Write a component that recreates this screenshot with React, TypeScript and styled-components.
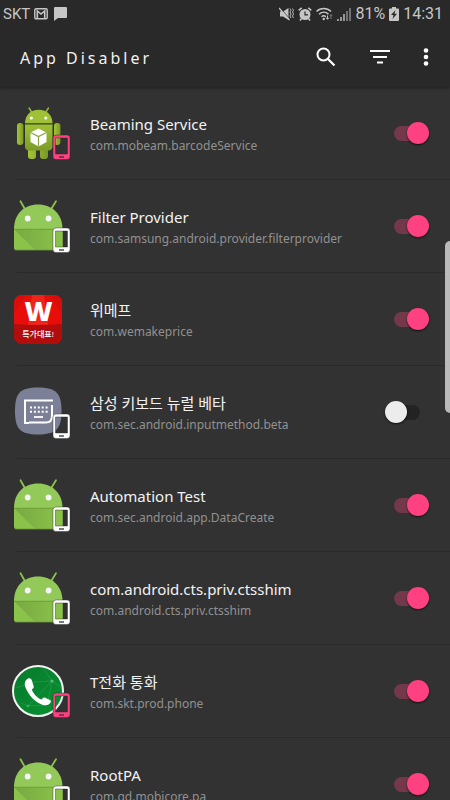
import React, { useId, useState } from "react";
import styled, { createGlobalStyle } from "styled-components";

const GlobalStyle = createGlobalStyle`
  *, *::before, *::after { box-sizing: border-box; }
  body {
    margin: 0;
    background: #323232;
    color: #f2f2f2;
    font-family: "Noto Sans", "Noto Sans CJK KR", sans-serif;
  }
`;

const Screen = styled.div`
  position: relative;
  display: flex;
  flex-direction: column;
  height: 100vh;
  overflow: hidden;
`;

const Header = styled.header`
  position: relative;
  z-index: 1;
  flex: none;
  background: #292929;
  box-shadow: 0 1px 3px rgba(0, 0, 0, 0.4);
`;

const StatusBar = styled.div`
  display: flex;
  align-items: center;
  justify-content: space-between;
  height: 28px;
  padding: 0 7px 0 3px;
  color: #c6c6c6;
  font-family: Roboto, sans-serif;
  font-size: 16px;
  line-height: 20px;
`;

const StatusGroup = styled.div`
  display: flex;
  align-items: center;
  gap: 4px;
  svg { display: block; flex: none; }
`;

const Carrier = styled.span`
  font-size: 15px;
`;

const Toolbar = styled.div`
  display: flex;
  align-items: center;
  height: 59px;
  padding: 0 15px 2px 20px;
`;

const Title = styled.h1`
  flex: 1;
  margin: 0;
  padding-top: 2px;
  font-size: 16px;
  font-weight: 400;
  line-height: 24px;
  letter-spacing: 3px;
`;

const Actions = styled.div`
  display: flex;
  align-items: center;
  gap: 20px;
`;

const IconButton = styled.button<{ $width: number }>`
  display: flex;
  align-items: center;
  justify-content: center;
  width: ${(p) => p.$width}px;
  height: 28px;
  padding: 0;
  border: 0;
  background: none;
  color: #fff;
  cursor: pointer;
`;

const List = styled.ul`
  flex: 1;
  min-height: 0;
  margin: 0;
  padding: 0;
  list-style: none;
  overflow-y: auto;
  scrollbar-width: none;
`;

const Row = styled.li`
  margin-left: 17px;
  border-bottom: 1px solid #2a2a2a;
`;

const RowLabel = styled.label`
  display: flex;
  align-items: center;
  gap: 18px;
  height: 92px;
  padding-right: 20px;
  margin-left: -5px;
  cursor: pointer;
`;

const AppIcon = styled.svg`
  display: block;
  flex: none;
  width: 60px;
  height: 54px;
`;

const Texts = styled.span`
  display: flex;
  flex: 1;
  flex-direction: column;
  min-width: 0;
  padding-top: 4px;
  white-space: nowrap;
`;

const Name = styled.span`
  font-size: 15px;
  line-height: 22px;
`;

const PackageName = styled.span`
  color: #919191;
  font-size: 12px;
  line-height: 22px;
`;

const Switch = styled.input`
  appearance: none;
  flex: none;
  display: flex;
  align-items: center;
  width: 26px;
  height: 15px;
  margin: 0 10px 0 0;
  border-radius: 8px;
  background: #232323;
  cursor: pointer;

  &::before {
    content: "";
    flex: none;
    width: 22px;
    height: 22px;
    margin-left: -9px;
    border-radius: 50%;
    background: #ececec;
    box-shadow: 0 1px 2px rgba(0, 0, 0, 0.7);
  }
  &:checked { background: #73394b; }
  &:checked::before {
    margin-left: 13px;
    background: #ff4081;
  }
`;

const ScrollThumb = styled.div`
  position: absolute;
  z-index: 2;
  top: 241px;
  right: 0;
  width: 5px;
  height: 172px;
  border-radius: 5px 0 0 5px;
  background: #b9b9b9;
`;

const PINK = "#ff4081";

function DeviceBadge({ color }: { color: string }) {
  return (
    <g>
      <path
        fillRule="evenodd"
        fill={color}
        stroke="#262626"
        strokeOpacity=".7"
        strokeWidth=".6"
        d="M44 29h11a3 3 0 0 1 3 3v18.500a3 3 0 0 1-3 3H44a3 3 0 0 1-3-3V32a3 3 0 0 1 3-3ZM43.500 32V48h12V32Z"
      />
      <path d="M47 51h5" stroke="#333" strokeWidth="1.300" />
    </g>
  );
}

function DroidIcon() {
  return (
    <AppIcon viewBox="0 0 60 54" aria-hidden="true">
      <defs>
        <linearGradient id="droidShade" x1="0" y1="0" x2="1" y2="0">
          <stop offset="0" stopColor="#78a942" />
          <stop offset="1" stopColor="#8bc34a" />
        </linearGradient>
      </defs>
      <path d="M8.500 2.200 13.400 11M44 2.200 38.600 11" stroke="#8bc34a" strokeWidth="1.800" strokeLinecap="round" />
      <path d="M2 30C2 15 12 5.500 26 5.500S50.500 15 50.500 30Z" fill="#92c958" />
      <path d="M2 30h48.500v19a2 2 0 0 1-2 2H4a2 2 0 0 1-2-2Z" fill="#8bc34a" />
      <path d="M2 30h48.500v19a2 2 0 0 1-2 2H23Z" fill="url(#droidShade)" />
      <path d="M2 30.300h48.500" stroke="#6f9f3d" strokeWidth="1" />
      <path d="M3 51h46" stroke="#6d9a3c" strokeWidth=".8" />
      <circle cx="15.700" cy="19.500" r="2.900" fill="#f5f5f5" />
      <circle cx="36.600" cy="19.500" r="2.900" fill="#f5f5f5" />
      <DeviceBadge color="#fff" />
    </AppIcon>
  );
}

function RobotIcon() {
  return (
    <AppIcon viewBox="0 0 60 54" aria-hidden="true">
      <defs>
        <linearGradient id="robotBody" x1="0" y1="0" x2="0" y2="1">
          <stop offset="0" stopColor="#9fc136" />
          <stop offset="1" stopColor="#7c9c28" />
        </linearGradient>
        <linearGradient id="robotLimb" x1="0" y1="0" x2="1" y2="0">
          <stop offset="0" stopColor="#a4c436" />
          <stop offset="1" stopColor="#7b9a26" />
        </linearGradient>
      </defs>
      <path d="M17 2l4 6M36.500 2l-4 6" stroke="#9aba3b" strokeWidth="1.400" strokeLinecap="round" />
      <rect x="5" y="17" width="6.400" height="22" rx="3" fill="url(#robotLimb)" />
      <rect x="42" y="17" width="6.400" height="22" rx="3" fill="url(#robotLimb)" />
      <path d="M16 40h8v10a3 3 0 0 1-3 3h-2a3 3 0 0 1-3-3ZM28 40h8v10a3 3 0 0 1-3 3h-2a3 3 0 0 1-3-3Z" fill="url(#robotLimb)" />
      <path d="M13 18h27.500v22a4 4 0 0 1-4 4.500H17a4 4 0 0 1-4-4.500Z" fill="url(#robotBody)" />
      <path d="M13 17.500C13 9 18.500 3.800 26.700 3.800S40.500 9 40.500 17.500Z" fill="#9fc136" />
      <path d="M13 18h27.500" stroke="#344016" strokeWidth="1" />
      <circle cx="19.300" cy="12" r="1.600" fill="#fff" />
      <circle cx="33.800" cy="12" r="1.600" fill="#fff" />
      <path d="m26.500 22.500 8 4V36l-8 4.500-8-4.500v-9.500Z" fill="#fff" />
      <path d="m18.500 26.500 8 4 8-4M26.500 30.500v10" fill="none" stroke="#86a442" strokeWidth="1.200" />
      <DeviceBadge color={PINK} />
    </AppIcon>
  );
}

const IconText = styled.text`
  fill: #fff;
  text-anchor: middle;
  font-family: "Open Sans", "Noto Sans CJK KR", sans-serif;
`;

function ShopIcon() {
  return (
    <AppIcon viewBox="0 0 60 54" aria-hidden="true">
      <defs>
        <clipPath id="shopTile">
          <rect x="2" y="3" width="48" height="49" rx="8" />
        </clipPath>
      </defs>
      <g clipPath="url(#shopTile)">
        <path d="M2 3h48v49H2Z" fill="#e60d0a" />
        <path d="M15 3 2 21V3ZM37 3l13 18V3Z" fill="#d90d0a" />
        <path d="M20 3h12l4 30H16Z" fill="#ef241b" />
        <path d="M2 32q24 2 48 0v20H2Z" fill="#b20d0b" />
      </g>
      <IconText x="26.500" y="29" fontSize="27" fontWeight="800">W</IconText>
      <IconText x="26" y="45" fontSize="8" fontWeight="500">특가대표!</IconText>
    </AppIcon>
  );
}

function KeyboardIcon() {
  return (
    <AppIcon viewBox="0 0 60 54" aria-hidden="true">
      <path d="M26 2.500C44 2.500 49.500 8 49.500 26S44 49.500 26 49.500 3 44 3 26 8 2.500 26 2.500Z" fill="#7c8096" />
      <path d="M17 38h-4V15.500h28M40 20v11q0 6.500-6 6.500H17" fill="none" stroke="#fff" strokeWidth="2" />
      <path d="M18 22.500h18M18 26.700h18" stroke="#fff" strokeWidth="2" strokeDasharray="2 1.900" />
      <path d="M22 32h9" stroke="#fff" strokeWidth="1.800" />
      <DeviceBadge color="#fff" />
    </AppIcon>
  );
}

function PhoneIcon() {
  return (
    <AppIcon viewBox="0 0 60 54" aria-hidden="true">
      <defs>
        <linearGradient id="phoneDisc" x1="0" y1="0" x2="1" y2="1">
          <stop offset="0" stopColor="#087a2c" />
          <stop offset="1" stopColor="#079232" />
        </linearGradient>
      </defs>
      <circle cx="26" cy="27" r="25" fill="url(#phoneDisc)" stroke="#f4f4f4" strokeWidth="2" />
      <path d="m4 24 18-6 18-1-9-13M40 17l-5 24-19 1 24-25 9 6M16 42 9 39" fill="none" stroke="#62b27b" strokeOpacity=".4" strokeWidth=".7" />
      <circle cx="40" cy="17" r="1.500" fill="#65b77f" />
      <circle cx="16" cy="42" r="1.300" fill="#4ca96a" />
      <path
        d="M16 14.500c-3 1.500-4 5-2.500 9C16.500 31 23 38.500 31 41c3.500.8 6.500-.3 7.800-3 .3-.8 0-1.400-.8-1.900l-4.800-2.400c-1-.5-1.900-.2-2.500.5l-1.200 1.400C25.500 34 21.500 30 19.800 25.500l1.200-1c.8-.7 1-1.500.6-2.500l-1.700-5.500c-.6-1.800-2-2.600-3.900-2Z"
        fill="#fff"
      />
      <DeviceBadge color={PINK} />
    </AppIcon>
  );
}

function GmailGlyph() {
  return (
    <svg width="14" height="12" viewBox="0 0 14 12" aria-hidden="true">
      <rect x=".8" y=".8" width="12.400" height="10" rx="1.200" fill="none" stroke="currentColor" strokeWidth="1.400" />
      <path d="M3.300 10.500V3L7 6l3.700-3v7.500" fill="none" stroke="currentColor" strokeWidth="1.600" />
    </svg>
  );
}

function ChatGlyph() {
  return (
    <svg width="16" height="14" viewBox="0 0 16 14" aria-hidden="true">
      <path d="M3 0h11q1 0 1 1v9q0 1-1 1H6l-4 3V1q0-1 1-1Z" fill="currentColor" />
    </svg>
  );
}

function MuteGlyph() {
  return (
    <svg width="15" height="14" viewBox="0 0 15 14" aria-hidden="true">
      <path d="M1 4.500h3L9.500 1v12L4 9.500H1Z" fill="currentColor" />
      <path d="m1 1 10 11" stroke="#292929" strokeWidth="1" />
      <path d="m0 1 10.500 12" stroke="currentColor" strokeWidth="1.400" />
      <path d="m11 1.500 1 1.800L11 5l1 2-1 2 1 2M13.500 1.500l1 1.800-1 1.700 1 2-1 2 1 2" fill="none" stroke="currentColor" strokeWidth=".9" />
    </svg>
  );
}

function AlarmGlyph() {
  return (
    <svg width="14" height="14" viewBox="0 0 14 14" aria-hidden="true">
      <circle cx="7" cy="7.500" r="5.500" fill="currentColor" />
      <path d="m.7 3.300 3-2.500m9.600 2.500-3-2.500M3.500 11.500 2 13.500m8.500-2 1.500 2" stroke="currentColor" strokeWidth="1.500" />
      <path d="M7 4.500v3.300h3" fill="none" stroke="#292929" strokeWidth="1.200" />
    </svg>
  );
}

function WifiGlyph() {
  return (
    <svg width="17" height="14" viewBox="0 0 17 14" aria-hidden="true">
      <path d="M.5 4.500C4.500.5 11 .5 15 4.500M3 7.200c3-2.700 6.800-2.700 9.500 0M5.500 9.800c1.500-1.300 3-1.300 4.300 0" fill="none" stroke="currentColor" strokeWidth="1.400" />
      <circle cx="7.700" cy="12" r="1.200" fill="currentColor" />
      <path d="M11.500 8.500v3.500m-1.500-1.300 1.500 1.600 1.500-1.600" fill="none" stroke="currentColor" />
      <path d="M15 12V7.500m-1.400 1.600L15 7.500l1.400 1.600" fill="none" stroke="#777" />
    </svg>
  );
}

function SignalGlyph() {
  return (
    <svg width="14" height="13" viewBox="0 0 14 13" aria-hidden="true">
      <path d="M1 13v-2M4 13V9M7 13V6" stroke="currentColor" strokeWidth="1.400" />
      <path d="M10 13V3M13 13V0" stroke="#909090" strokeWidth="1.400" />
    </svg>
  );
}

function BatteryGlyph() {
  return (
    <svg width="10" height="14" viewBox="0 0 10 14" aria-hidden="true">
      <path d="M3 0h4v1.500h2q1 0 1 1V13q0 1-1 1H1q-1 0-1-1V2.500q0-1 1-1h2Z" fill="currentColor" />
      <path d="M6.500 3 2 8h2.500L3.500 12 8 6.800H5.500Z" fill="#292929" />
    </svg>
  );
}

function SearchGlyph() {
  return (
    <svg width="20" height="20" viewBox="0 0 20 20" aria-hidden="true">
      <circle cx="7.500" cy="7.500" r="6" fill="none" stroke="currentColor" strokeWidth="2" />
      <path d="m12 12 6.500 6.500" stroke="currentColor" strokeWidth="2.200" />
    </svg>
  );
}

function FilterGlyph() {
  return (
    <svg width="20" height="14" viewBox="0 0 20 14" aria-hidden="true">
      <path d="M0 1h20M3 7h14M7 12.500h6" stroke="currentColor" strokeWidth="2" />
    </svg>
  );
}

function MoreGlyph() {
  return (
    <svg width="6" height="20" viewBox="0 0 6 20" aria-hidden="true">
      <g fill="currentColor">
        <circle cx="3" cy="3.500" r="2.300" />
        <circle cx="3" cy="10" r="2.300" />
        <circle cx="3" cy="16.500" r="2.300" />
      </g>
    </svg>
  );
}

type AppEntry = { name: string; pkg: string; icon: () => React.ReactElement; enabled: boolean };

const APPS: AppEntry[] = [
  { name: "Beaming Service", pkg: "com.mobeam.barcodeService", icon: RobotIcon, enabled: true },
  { name: "Filter Provider", pkg: "com.samsung.android.provider.filterprovider", icon: DroidIcon, enabled: true },
  { name: "위메프", pkg: "com.wemakeprice", icon: ShopIcon, enabled: true },
  { name: "삼성 키보드 뉴럴 베타", pkg: "com.sec.android.inputmethod.beta", icon: KeyboardIcon, enabled: false },
  { name: "Automation Test", pkg: "com.sec.android.app.DataCreate", icon: DroidIcon, enabled: true },
  { name: "com.android.cts.priv.ctsshim", pkg: "com.android.cts.priv.ctsshim", icon: DroidIcon, enabled: true },
  { name: "T전화 통화", pkg: "com.skt.prod.phone", icon: PhoneIcon, enabled: true },
  { name: "RootPA", pkg: "com.gd.mobicore.pa", icon: DroidIcon, enabled: true },
];

function AppRow({ app }: { app: AppEntry }) {
  const id = useId();
  const [enabled, setEnabled] = useState(app.enabled);
  const Icon = app.icon;
  return (
    <Row>
      <RowLabel htmlFor={id}>
        <Icon />
        <Texts>
          <Name>{app.name}</Name>
          <PackageName>{app.pkg}</PackageName>
        </Texts>
        <Switch
          id={id}
          type="checkbox"
          role="switch"
          checked={enabled}
          onChange={(e) => setEnabled(e.target.checked)}
        />
      </RowLabel>
    </Row>
  );
}

export default function App() {
  return (
    <Screen>
      <GlobalStyle />
      <Header>
        <StatusBar>
          <StatusGroup>
            <Carrier>SKT</Carrier>
            <GmailGlyph />
            <ChatGlyph />
          </StatusGroup>
          <StatusGroup>
            <MuteGlyph />
            <AlarmGlyph />
            <WifiGlyph />
            <SignalGlyph />
            <span>81%</span>
            <BatteryGlyph />
            <span>14:31</span>
          </StatusGroup>
        </StatusBar>
        <Toolbar>
          <Title>App Disabler</Title>
          <Actions>
            <IconButton type="button" $width={34} aria-label="Search"><SearchGlyph /></IconButton>
            <IconButton type="button" $width={34} aria-label="Filter"><FilterGlyph /></IconButton>
            <IconButton type="button" $width={18} aria-label="More options"><MoreGlyph /></IconButton>
          </Actions>
        </Toolbar>
      </Header>
      <List>
        {APPS.map((app) => (
          <AppRow key={app.pkg} app={app} />
        ))}
      </List>
      <ScrollThumb />
    </Screen>
  );
}
